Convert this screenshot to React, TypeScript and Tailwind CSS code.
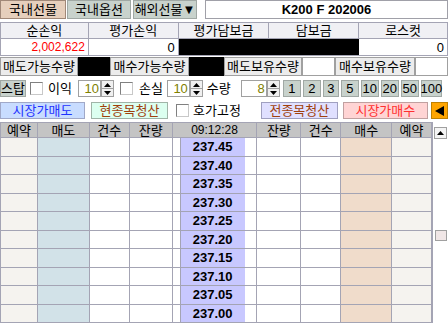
import React from "react";

const prices = ["237.45", "237.40", "237.35", "237.30", "237.25", "237.20", "237.15", "237.10", "237.05", "237.00"];

function Up() {
  return (
    <svg width="7" height="4" viewBox="0 0 7 4">
      <path d="M3.5 0L7 4H0z" fill="#000" />
    </svg>
  );
}
function Down() {
  return (
    <svg width="7" height="4" viewBox="0 0 7 4">
      <path d="M0 0H7L3.5 4z" fill="#000" />
    </svg>
  );
}

function Spin() {
  return (
    <div className="flex flex-col w-[13px] h-full">
      <div className="flex-1 border border-[#a0a0a0] bg-[#f0f0f0] flex items-center justify-center">
        <Up />
      </div>
      <div className="flex-1 border border-t-0 border-[#a0a0a0] bg-[#f0f0f0] flex items-center justify-center">
        <Down />
      </div>
    </div>
  );
}

function NumInput({ w, v }: { w: string; v: string }) {
  return (
    <div className={`${w} h-full border border-[#a0a0a0] bg-white flex items-center justify-end pr-[1px] text-[13px] text-[#808000]`}>
      {v}
    </div>
  );
}

function Check() {
  return <div className="w-[13px] h-[13px] border border-t-[#808080] border-l-[#808080] border-r-[#c8c8c8] border-b-[#c8c8c8] bg-white" />;
}

const cols = ["w-[37px]", "w-[52px]", "w-[40px]", "w-[43px]", "w-[85px]", "w-[44px]", "w-[40px]", "w-[51px]", "w-[40px]"];

export default function App() {
  return (
    <div className="w-[448px] h-[324px] overflow-hidden bg-white font-['Liberation_Sans','Noto_Sans_CJK_KR',sans-serif] text-black leading-none">
      {/* Row 1 tabs */}
      <div className="flex h-[20px]">
        <div className="w-[66px] h-[19px] bg-[#e6cfbc] border border-[#a08878] flex items-center justify-center text-[13px]">국내선물</div>
        <div className="w-[64px] h-[19px] ml-[1px] bg-[#c8d2cc] border border-[#a0a8a4] flex items-center justify-center text-[13px]">국내옵션</div>
        <div className="w-[64px] h-[19px] ml-[2px] bg-[#c8d2cc] border border-[#a0a8a4] flex items-center justify-center text-[13px]">해외선물▼</div>
        <div className="w-[243px] h-[19px] ml-[8px] bg-white border border-[#a0a0a8] flex items-center justify-center text-[13px] font-bold">K200 F 202006</div>
      </div>

      {/* Summary table */}
      <div className="mt-[2px] border-t border-l border-[#a4a4b4]">
        <div className="flex h-[16px]">
          {[
            ["w-[88px]", "순손익"],
            ["w-[90px]", "평가손익"],
            ["w-[91px]", "평가담보금"],
            ["w-[90px]", "담보금"],
            ["w-[89px]", "로스컷"],
          ].map(([w, t]) => (
            <div key={t} className={`${w} bg-[#f0f0f4] border-r border-b border-[#a4a4b4] flex items-center justify-center text-[13px]`}>
              {t}
            </div>
          ))}
        </div>
        <div className="flex h-[17px]">
          <div className="w-[88px] border-r border-b border-[#a4a4b4] flex items-center justify-end pr-[3px] text-[12px] text-[#ff0000]">2,002,622</div>
          <div className="w-[90px] border-r border-b border-[#a4a4b4] flex items-center justify-end pr-[3px] text-[13px]">0</div>
          <div className="w-[181px] bg-black border-b border-[#a4a4b4]" />
          <div className="w-[89px] border-r border-b border-[#a4a4b4] flex items-center justify-end pr-[3px] text-[13px]">0</div>
        </div>
      </div>

      {/* Quantities row */}
      <div className="flex h-[19px] mt-[1px]">
        <div className="w-[78px] bg-[#ececec] border border-[#a0a0a0] flex items-center justify-center text-[13px]">매도가능수량</div>
        <div className="w-[32px] bg-black" />
        <div className="w-[79px] bg-[#ececec] border border-[#a0a0a0] flex items-center justify-center text-[13px]">매수가능수량</div>
        <div className="w-[35px] bg-black" />
        <div className="w-[78px] bg-[#ececec] border border-[#a0a0a0] flex items-center justify-center text-[13px]">매도보유수량</div>
        <div className="w-[33px] bg-white border border-[#a0a0a0]" />
        <div className="w-[80px] bg-[#ececec] border border-[#a0a0a0] flex items-center justify-center text-[13px]">매수보유수량</div>
        <div className="w-[33px] bg-white border border-[#a0a0a0]" />
      </div>

      {/* Stop row */}
      <div className="flex items-center h-[17px] mt-[4px]">
        <div className="w-[26px] h-full bg-[#c8d2cc] border border-[#a0a8a4] flex items-center justify-center text-[13px]">스탑</div>
        <div className="ml-[4px]"><Check /></div>
        <div className="ml-[5px] text-[13px]">이익</div>
        <div className="ml-[6px] flex h-full">
          <NumInput w="w-[23px]" v="10" />
          <Spin />
        </div>
        <div className="ml-[6px]"><Check /></div>
        <div className="ml-[6px] text-[13px]">손실</div>
        <div className="ml-[4px] flex h-full">
          <NumInput w="w-[23px]" v="10" />
          <Spin />
        </div>
        <div className="ml-[4px] text-[13px]">수량</div>
        <div className="ml-[10px] flex h-full">
          <NumInput w="w-[26px]" v="8" />
          <Spin />
        </div>
        <div className="ml-[3px] flex h-full gap-[2px]">
          {[
            ["w-[18px]", "1"],
            ["w-[18px]", "2"],
            ["w-[16px]", "3"],
            ["w-[18px]", "5"],
            ["w-[18px]", "10"],
            ["w-[18px]", "20"],
            ["w-[18px]", "50"],
            ["w-[21px]", "100"],
          ].map(([w, t]) => (
            <div key={t} className={`${w} h-full bg-[#c8d2cc] border border-[#a0a8a4] flex items-center justify-center text-[13px]`}>
              {t}
            </div>
          ))}
        </div>
      </div>

      {/* Order buttons row */}
      <div className="flex items-center h-[17px] mt-[5px]">
        <div className="w-[85px] h-full bg-[#c8dcff] border border-[#a0a8c8] flex items-center justify-center text-[13px] text-[#1e32ff]">시장가매도</div>
        <div className="ml-[6px] w-[77px] h-full bg-[#dcfff0] border border-[#a0b4a8] flex items-center justify-center text-[13px] text-[#a0400c]">현종목청산</div>
        <div className="ml-[8px]"><Check /></div>
        <div className="ml-[4px] text-[13px]">호가고정</div>
        <div className="ml-[20px] w-[77px] h-full bg-[#e0e0ff] border border-[#a0a0c0] flex items-center justify-center text-[13px] text-[#a0400c]">전종목청산</div>
        <div className="ml-[5px] w-[85px] h-full bg-[#ffd4d4] border border-[#c0a0a0] flex items-center justify-center text-[13px] text-[#ff3030]">시장가매수</div>
        <div className="ml-[3px] w-[17px] h-full bg-[#ffa500] border border-[#c08000] flex items-center justify-center">
          <svg width="9" height="10" viewBox="0 0 9 10">
            <path d="M0 5L9 0V10z" fill="#000" />
          </svg>
        </div>
      </div>

      {/* Hoga table */}
      <div className="flex mt-[3px]">
        <div className="w-[432px] border-t border-l border-[#a4a4b4]">
          <div className="flex h-[15px]">
            {["예약", "매도", "건수", "잔량", "09:12:28", "잔량", "건수", "매수", "예약"].map((t, i) => (
              <div key={i} className={`${cols[i]} bg-[#c4c4c4] border-r border-b border-[#a4a4b4] flex items-center justify-center ${i === 4 ? "text-[12px]" : "text-[13px]"}`}>
                {t}
              </div>
            ))}
          </div>
          {prices.map((p) => (
            <div key={p} className="flex h-[18.5px]">
              <div className={`${cols[0]} bg-[#f5f3ef] border-r border-b border-[#a4a4b4]`} />
              <div className={`${cols[1]} bg-[#d2e2e8] border-r border-b border-[#a4a4b4]`} />
              <div className={`${cols[2]} border-r border-b border-[#a4a4b4]`} />
              <div className={`${cols[3]} border-r border-b border-[#a4a4b4]`} />
              <div className={`${cols[4]} flex border-r border-b border-[#a4a4b4]`}>
                <div className="w-[8px] border-r border-[#a4a4b4]" />
                <div className="w-[64px] bg-[#c8c8ff] flex items-center justify-center text-[13px] font-bold">{p}</div>
                <div className="flex-1" />
              </div>
              <div className={`${cols[5]} border-r border-b border-[#a4a4b4]`} />
              <div className={`${cols[6]} border-r border-b border-[#a4a4b4]`} />
              <div className={`${cols[7]} bg-[#f0dccb] border-r border-b border-[#a4a4b4]`} />
              <div className={`${cols[8]} bg-[#f5f3ef] border-r border-b border-[#a4a4b4]`} />
            </div>
          ))}
        </div>
        <div className="w-[16px] border-l border-[#a4a4b4] bg-white flex flex-col items-center">
          <div className="mt-[5px] w-[13px] h-[12px] bg-[#f4f4f4] border border-[#a0a0a0] flex items-center justify-center">
            <Up />
          </div>
          <div className="mt-[91px] w-[12px] h-[11px] bg-[#f0e6e6] border border-[#a0a0a0]" />
        </div>
      </div>
    </div>
  );
}
